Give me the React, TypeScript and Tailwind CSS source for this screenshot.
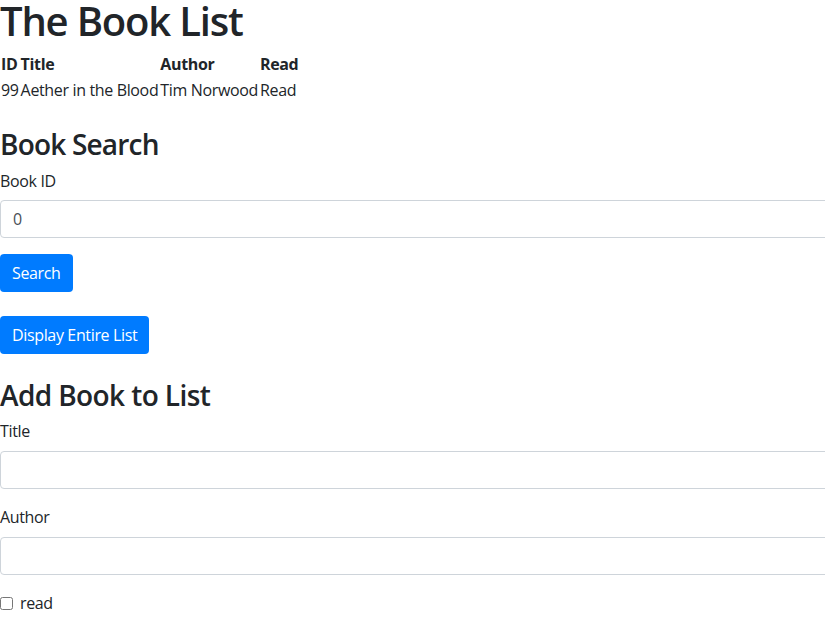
import React from "react";

const books = [{ id: 99, title: "Aether in the Blood", author: "Tim Norwood", read: true }];

export default function App() {
  return (
    <div className="h-screen w-screen overflow-hidden bg-white text-[#212529] text-base leading-6 tracking-[-0.35px] font-['Segoe_UI','Open_Sans',sans-serif]">
      <div className="w-[900px]">
        <h1 className="mb-[9px] text-[40px] font-semibold leading-[42px] tracking-[-1.2px]">The Book List</h1>
        <table className="border-collapse">
          <thead>
            <tr>
              <th className="p-px text-left font-bold">ID</th>
              <th className="p-px text-left font-bold">Title</th>
              <th className="p-px text-left font-bold">Author</th>
              <th className="p-px text-left font-bold">Read</th>
            </tr>
          </thead>
          <tbody>
            {books.map((b) => (
              <tr key={b.id}>
                <td className="p-px">{b.id}</td>
                <td className="p-px">{b.title}</td>
                <td className="p-px">{b.author}</td>
                <td className="p-px">{b.read ? "Read" : "Unread"}</td>
              </tr>
            ))}
          </tbody>
        </table>

        <h3 className="mt-[25px] mb-[7px] text-[28px] font-semibold leading-[1.2] tracking-[-0.8px]">Book Search</h3>
        <div className="mb-4">
          <label className="mb-[7px] inline-block">Book ID</label>
          <input
            type="number"
            defaultValue={0}
            className="block h-[38px] w-full rounded border border-[#ced4da] px-3 py-1.5 text-[#495057] outline-none"
          />
        </div>
        <button className="mb-6 block h-[38px] rounded bg-[#007bff] px-3 text-white">Search</button>
        <button className="block h-[38px] rounded bg-[#007bff] px-3 text-white">Display Entire List</button>

        <h3 className="mt-[25px] mb-[7px] text-[28px] font-semibold leading-[1.2] tracking-[-0.6px]">Add Book to List</h3>
        <div className="mb-4">
          <label className="mb-2 inline-block">Title</label>
          <input className="block h-[38px] w-full rounded border border-[#ced4da] px-3 py-1.5 outline-none" />
        </div>
        <div className="mb-4">
          <label className="mb-2 inline-block">Author</label>
          <input className="block h-[38px] w-full rounded border border-[#ced4da] px-3 py-1.5 outline-none" />
        </div>
        <div className="flex h-6 items-center gap-[7px]">
          <input type="checkbox" className="m-0 h-[13px] w-[13px]" />
          <label>read</label>
        </div>
      </div>
    </div>
  );
}
